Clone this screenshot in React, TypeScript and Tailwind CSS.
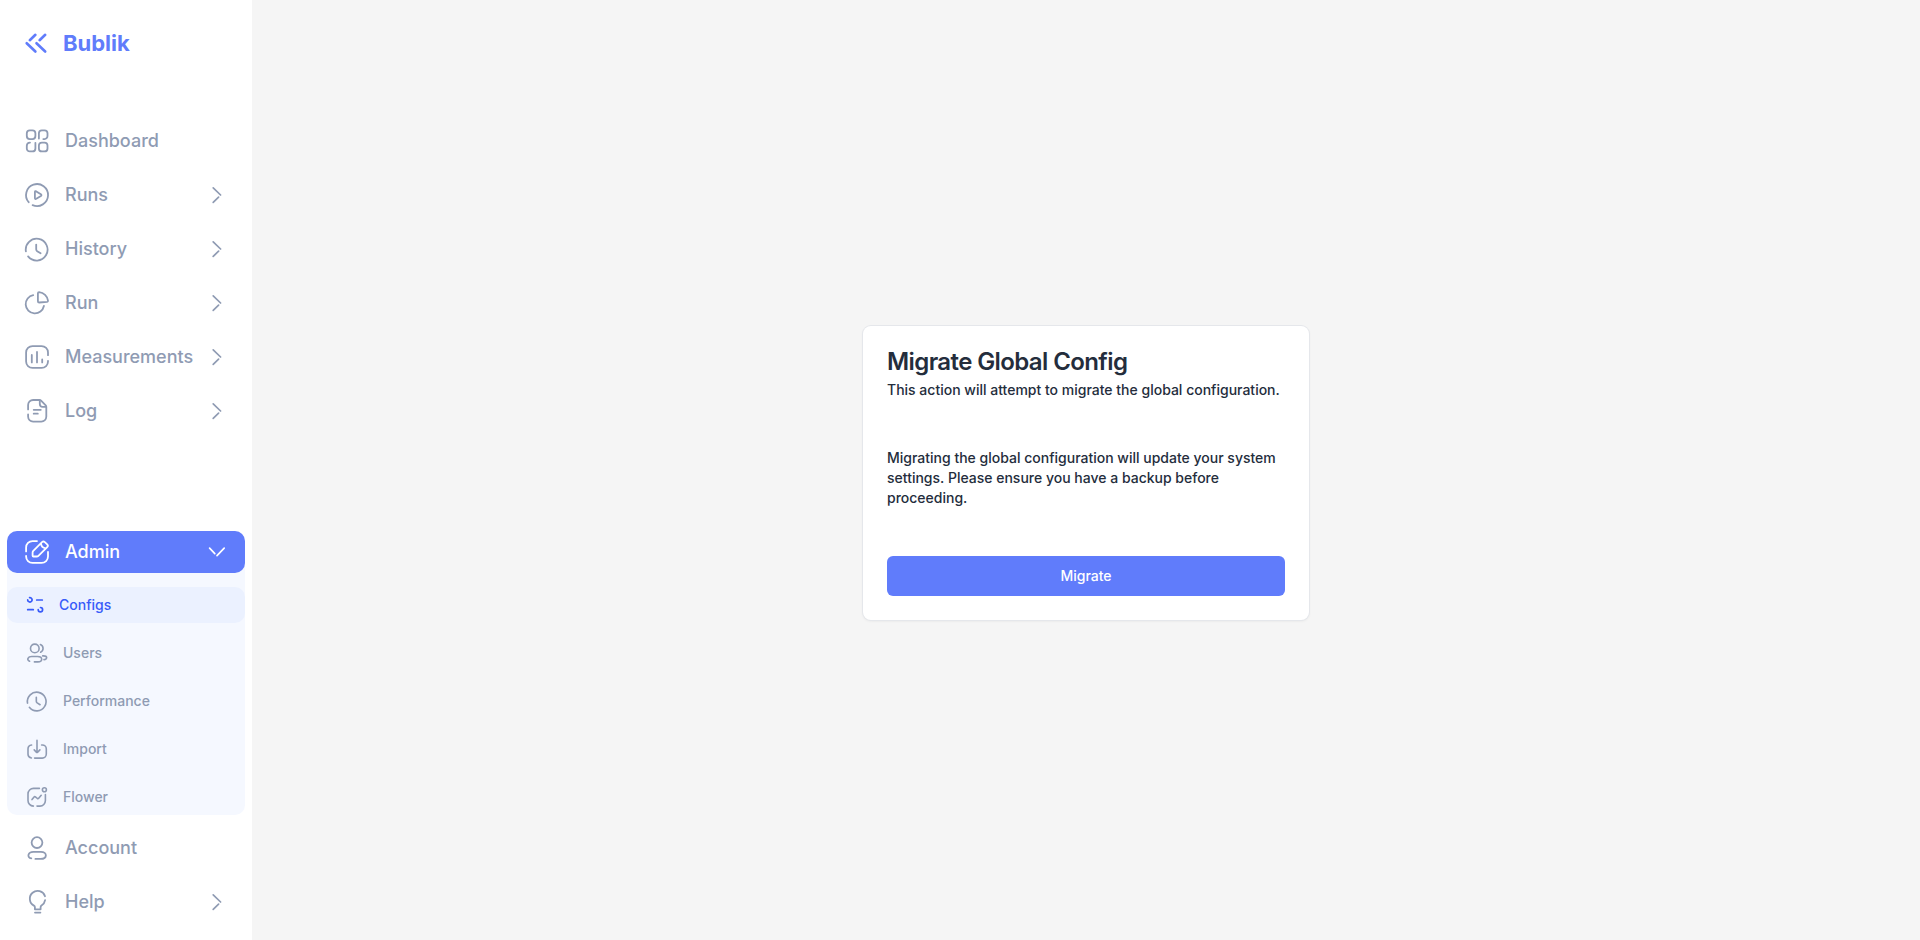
import type { ReactNode } from "react";

type IconProps = { children: ReactNode };

function NavSvg({ children }: IconProps) {
  return (
    <svg aria-hidden="true" viewBox="0 0 28 28" className="size-7 shrink-0" fill="none" stroke="currentColor" strokeWidth="1.8" strokeLinecap="round" strokeLinejoin="round">
      {children}
    </svg>
  );
}

function SubSvg({ children }: IconProps) {
  return (
    <svg aria-hidden="true" viewBox="0 0 24 24" className="size-6 shrink-0" fill="none" stroke="currentColor" strokeWidth="1.6" strokeLinecap="round" strokeLinejoin="round">
      {children}
    </svg>
  );
}

const clock = (
  <>
    <path d="M2.9 16.4A10.9 10.9 0 1 1 5.1 21.4" />
    <path d="M13.2 9.6V14.2Q13.2 15.4 14.2 16.2L17.6 18.3" />
  </>
);

const icons = {
  dashboard: (
    <NavSvg>
      <rect x="3.8" y="3.3" width="8.6" height="8.8" rx="3" />
      <path d="M15.9 11.6V6.3a3 3 0 0 1 3-3H21.5a3 3 0 0 1 3 3V9.1a3 3 0 0 1-3 3H20.3" />
      <path d="M7 15.6a3.2 3.2 0 0 0-3.2 3V21.4a3 3 0 0 0 3 3H9.4a3 3 0 0 0 3-3V15.8" />
      <rect x="15.9" y="15.6" width="8.6" height="8.8" rx="3" />
    </NavSvg>
  ),
  runs: (
    <NavSvg>
      <path d="M5.7 21.2A11 11 0 1 1 9.6 24.1" />
      <path d="M11.9 11.1V17Q11.9 18.6 13.3 17.8L17.9 15Q19 14.1 17.9 13.3L13.3 10.4Q11.9 9.6 11.9 11.1Z" />
    </NavSvg>
  ),
  history: <NavSvg>{clock}</NavSvg>,
  run: (
    <NavSvg>
      <path d="M10.2 6.1A9.2 9.2 0 1 0 20.9 17" />
      <path d="M14.9 4.3V12.2Q14.9 13.5 16.2 13.5L24.2 12.8Q25.1 12.7 25 11.6C24.4 7.2 20.8 3.6 16.1 3.1Q14.9 3.1 14.9 4.3Z" />
    </NavSvg>
  ),
  measurements: (
    <NavSvg>
      <path d="M25 12.2V9.5A6.4 6.4 0 0 0 18.6 3.1H9.5A6.4 6.4 0 0 0 3.1 9.5V18.5A6.4 6.4 0 0 0 9.5 24.9H18.6A6.4 6.4 0 0 0 25 18.5V17.8" />
      <path d="M8.8 12V19.4M14 9V19.4M19.2 16.4V19.4" />
    </NavSvg>
  ),
  log: (
    <NavSvg>
      <path d="M5.1 12.4V8A5 5 0 0 1 10.1 3H16.4Q17.4 3 18.1 3.7L22.7 8.3Q23.3 9 23.3 10V19.6A5 5 0 0 1 18.3 24.6H10.1A5 5 0 0 1 5.1 19.6V17.4" />
      <path d="M16.8 3.3V7Q16.8 9.8 19.6 9.8H23M10.7 12.8H17.8M10.7 16.7H14.8" />
    </NavSvg>
  ),
  admin: (
    <NavSvg>
      <path d="M14 3.1H9.5A6.4 6.4 0 0 0 3.1 9.5V13.4M3.1 17.8V18.5A6.4 6.4 0 0 0 9.5 24.9H18.6A6.4 6.4 0 0 0 25 18.5V14" />
      <path d="M9.6 14.5Q9.6 13.5 10.3 12.8L19 4.1Q20.4 2.8 21.8 4.1L24.2 6.4Q25.6 7.8 24.2 9.2L15.4 17.8Q14.7 18.5 13.7 18.5H10.4Q9.6 18.5 9.6 17.7ZM18 5.5Q18.4 9.8 22.7 10.3" />
    </NavSvg>
  ),
  account: (
    <NavSvg>
      <circle cx="14" cy="8.6" r="5.4" />
      <path d="M8.3 24.4C3.5 23.4 5 17.8 10.3 17.8H17.9C24.6 17.8 24.5 24.9 17.6 24.9H12.4" />
    </NavSvg>
  ),
  help: (
    <NavSvg>
      <path d="M22 8.2A7.8 7.8 0 1 0 10.9 17.6Q11.9 18.2 11.9 19.2V21.3H17.6V19.2Q17.6 18.2 18.5 17.6A7.8 7.8 0 0 0 22.1 12.2M12 24.6H17.4" />
    </NavSvg>
  ),
  configs: (
    <svg aria-hidden="true" viewBox="0 0 20 20" className="size-5 shrink-0" fill="none" stroke="currentColor" strokeWidth="1.7" strokeLinecap="round">
      <path d="M4.6 2.7A2.2 2.2 0 1 1 2.7 4.9M11.7 5H17.3M2.7 14.7H8.3M15.5 12.5A2.2 2.2 0 1 1 13.2 14.7" />
    </svg>
  ),
  users: (
    <SubSvg>
      <circle cx="9.8" cy="7.4" r="4.3" />
      <path d="M15.4 3.6A4.1 4.1 0 0 1 15.6 11.2" />
      <path d="M4.6 20.2C1.3 18.9 2.8 15.5 6.8 15.5H12.6C18 15.5 18 20.8 12.8 20.9H9.4" />
      <path d="M17.7 14.9C22.7 14.6 22.8 18.2 19 18.6" />
    </SubSvg>
  ),
  performance: (
    <svg aria-hidden="true" viewBox="0 0 28 28" className="size-6 shrink-0" fill="none" stroke="currentColor" strokeWidth="1.9" strokeLinecap="round" strokeLinejoin="round">
      {clock}
    </svg>
  ),
  import: (
    <SubSvg>
      <path d="M6.6 8A4 4 0 0 0 3 12V17.2A4 4 0 0 0 6.4 21M9.6 21.1H17.3A4 4 0 0 0 21.3 17.1V12A4 4 0 0 0 17.3 8H16.6" />
      <path d="M12 3.4V15.3M9.2 12.9L11.3 15.1Q12 15.7 12.7 15.1L14.9 12.9" />
    </SubSvg>
  ),
  flower: (
    <SubSvg>
      <path d="M14.4 3.4H8.5A5.5 5.5 0 0 0 3 8.9V15.5A5.5 5.5 0 0 0 8.4 21.1M12 21.1H15A5.5 5.5 0 0 0 20.4 15.6V9.6" />
      <circle cx="19.4" cy="4.8" r="2" />
      <path d="M7 14.6L9.1 11.9Q9.7 11.2 10.4 11.8L12.4 13.5Q13.1 14 13.7 13.3L16.2 10.3" />
    </SubSvg>
  ),
};

function Chevron({ open = false }: { open?: boolean }) {
  return (
    <svg aria-hidden="true" viewBox="0 0 24 24" className={open ? "ml-auto size-6 shrink-0 rotate-90" : "ml-auto size-6 shrink-0"} fill="none" stroke="currentColor" strokeWidth="1.7" strokeLinecap="round">
      <path d="M8.2 4.8L15.6 12M13.6 14.2L8.2 19.4" />
    </svg>
  );
}

type NavItemProps = { icon: ReactNode; label: string; expandable?: boolean };

function NavItem({ icon, label, expandable = false }: NavItemProps) {
  return (
    <li>
      <a href="#" className="flex h-[42px] items-center rounded-[10px] px-4 text-lg font-medium text-[#8f9bb3]">
        {icon}
        <span className="ml-3.5">{label}</span>
        {expandable && <Chevron />}
      </a>
    </li>
  );
}

function SubItem({ icon, label, active = false }: { icon: ReactNode; label: string; active?: boolean }) {
  return (
    <li>
      <a
        href="#"
        aria-current={active ? "page" : undefined}
        className={
          active
            ? "flex h-9 items-center gap-3.5 rounded-[10px] bg-[#ebf1ff] px-[18px] text-sm font-medium text-[#385bf9]"
            : "flex h-9 items-center gap-3.5 rounded-[10px] px-[18px] text-sm font-medium text-[#8f9bb3]"
        }
      >
        {icon}
        <span>{label}</span>
      </a>
    </li>
  );
}

export default function App() {
  return (
    <div className="flex min-h-screen bg-[#f5f5f5] font-['Inter',sans-serif] text-[#242d3c]">
      <aside className="flex w-[252px] shrink-0 flex-col bg-white px-[7px] pb-[17px]">
        <a href="#" className="mt-[22px] flex h-[42px] items-center gap-3 px-4 text-[22px] font-bold text-[#607cfb]">
          <svg aria-hidden="true" viewBox="0 0 28 28" className="size-7 shrink-0" fill="none" stroke="currentColor" strokeWidth="2.6" strokeLinecap="round">
            <path d="M12.4 5.8L6.8 11.2M3.7 14.2L12.4 22.5M22.2 5.8L16.6 11.2M13.5 14.2L22.2 22.5" />
          </svg>
          <span>Bublik</span>
        </a>
        <nav aria-label="Main" className="mt-14 flex flex-1 flex-col justify-between">
          <ul className="flex flex-col gap-3">
            <NavItem icon={icons.dashboard} label="Dashboard" />
            <NavItem icon={icons.runs} label="Runs" expandable />
            <NavItem icon={icons.history} label="History" expandable />
            <NavItem icon={icons.run} label="Run" expandable />
            <NavItem icon={icons.measurements} label="Measurements" expandable />
            <NavItem icon={icons.log} label="Log" expandable />
          </ul>
          <ul className="flex flex-col gap-3">
            <li className="rounded-[10px] bg-[#f5f8ff]">
              <button type="button" aria-expanded="true" className="flex h-[42px] w-full items-center rounded-[10px] bg-[#607cfb] px-4 text-lg font-medium text-white">
                {icons.admin}
                <span className="ml-3.5">Admin</span>
                <Chevron open />
              </button>
              <ul className="flex flex-col gap-3 pt-3.5">
                <SubItem icon={icons.configs} label="Configs" active />
                <SubItem icon={icons.users} label="Users" />
                <SubItem icon={icons.performance} label="Performance" />
                <SubItem icon={icons.import} label="Import" />
                <SubItem icon={icons.flower} label="Flower" />
              </ul>
            </li>
            <NavItem icon={icons.account} label="Account" />
            <NavItem icon={icons.help} label="Help" expandable />
          </ul>
        </nav>
      </aside>
      <main className="flex flex-1 items-center justify-center pt-1.5">
        <section className="w-full max-w-[446px] rounded-lg bg-white p-6 shadow-[0_0_0_1px_#e5e7eb,0_1px_3px_0_rgba(0,0,0,0.08)]">
          <h1 className="text-2xl leading-6 font-semibold tracking-tight">Migrate Global Config</h1>
          <p className="mt-1.5 text-sm font-medium">This action will attempt to migrate the global configuration.</p>
          <p className="my-12 text-sm font-medium">
            Migrating the global configuration will update your system settings. Please ensure you have a backup before proceeding.
          </p>
          <button type="button" className="h-10 w-full rounded-md bg-[#607cfb] text-sm font-medium text-white">
            Migrate
          </button>
        </section>
      </main>
    </div>
  );
}
